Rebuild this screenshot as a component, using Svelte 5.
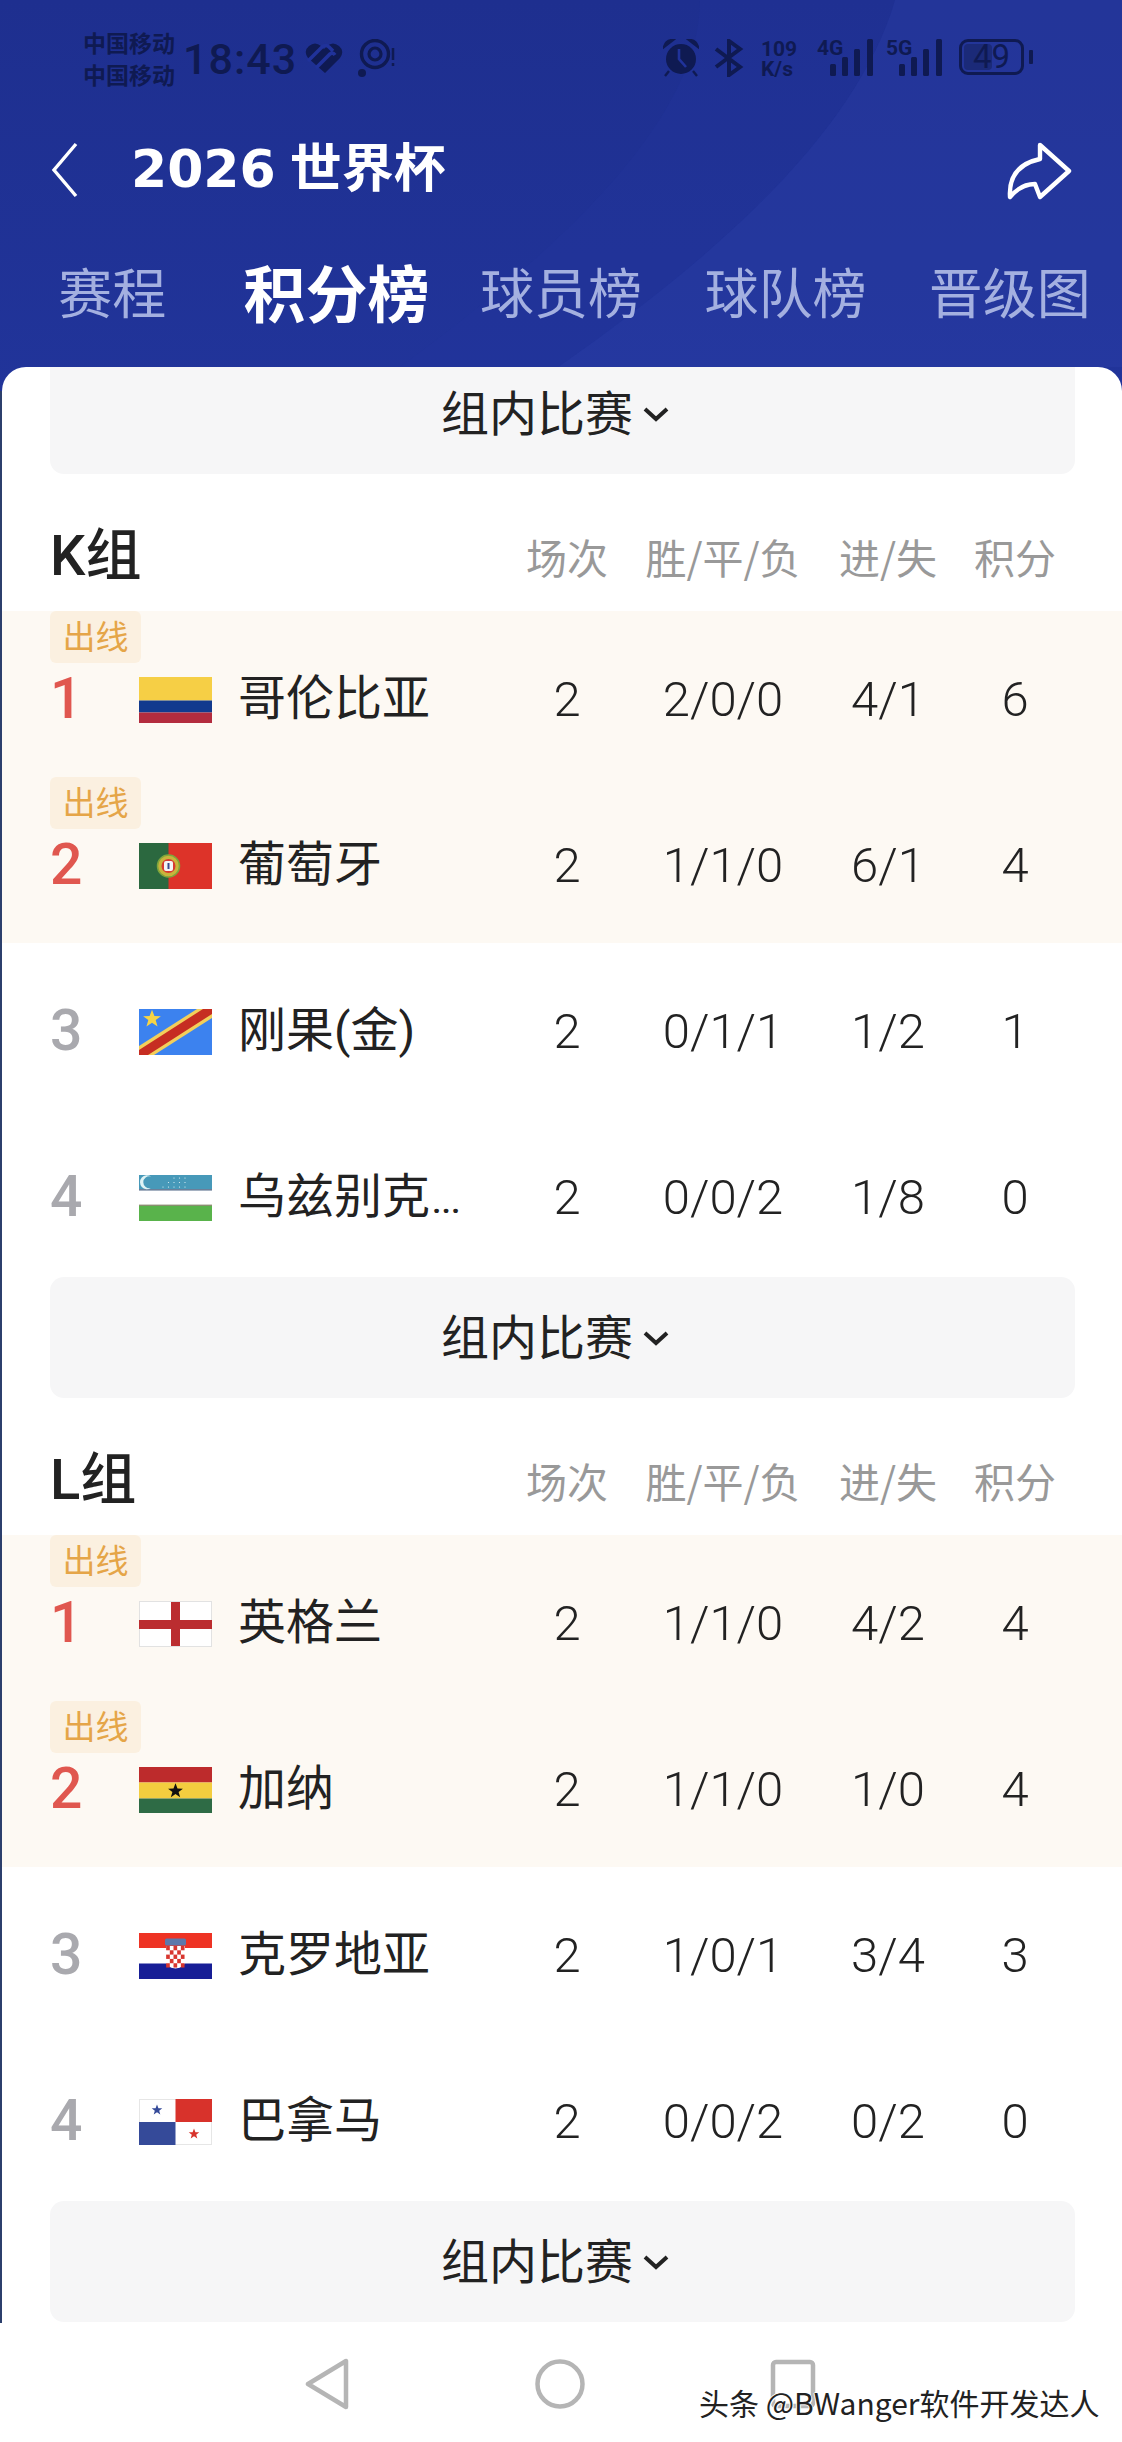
<script>
  const tabs = ['赛程', '积分榜', '球员榜', '球队榜', '晋级图'];

  const groups = [
    {
      name: 'K组',
      teams: [
        { rank: 1, flag: 'col', name: '哥伦比亚', played: 2, record: '2/0/0', goals: '4/1', pts: 6, through: true },
        { rank: 2, flag: 'por', name: '葡萄牙', played: 2, record: '1/1/0', goals: '6/1', pts: 4, through: true },
        { rank: 3, flag: 'cod', name: '刚果(金)', played: 2, record: '0/1/1', goals: '1/2', pts: 1 },
        { rank: 4, flag: 'uzb', name: '乌兹别克', cut: true, played: 2, record: '0/0/2', goals: '1/8', pts: 0 }
      ]
    },
    {
      name: 'L组',
      teams: [
        { rank: 1, flag: 'eng', name: '英格兰', played: 2, record: '1/1/0', goals: '4/2', pts: 4, through: true },
        { rank: 2, flag: 'gha', name: '加纳', played: 2, record: '1/1/0', goals: '1/0', pts: 4, through: true },
        { rank: 3, flag: 'cro', name: '克罗地亚', played: 2, record: '1/0/1', goals: '3/4', pts: 3 },
        { rank: 4, flag: 'pan', name: '巴拿马', played: 2, record: '0/0/2', goals: '0/2', pts: 0 }
      ]
    }
  ];

  // checker squares for the croatian shield
  const checks = [];
  for (let r = 0; r < 5; r++) {
    for (let c = 0; c < 5; c++) {
      if ((r + c) % 2 === 0) checks.push({ x: 26.5 + c * 4, y: 14 + r * 4 });
    }
  }
  const uzbDots = [];
  for (let r = 0; r < 3; r++) {
    for (let c = 0; c < 5; c++) {
      if (r + c >= 2) uzbDots.push({ x: 24 + c * 5.5, y: 3 + r * 4.5 });
    }
  }
  const star = 'M0 -5 L1.3 -1.6 L4.8 -1.5 L2 .6 L3 4 L0 2 L-3 4 L-2 .6 L-4.8 -1.5 L-1.3 -1.6Z';
</script>

{#snippet matchesButton()}
  <div class="matches">
    <span>组内比赛</span>
    <svg width="28" height="18" viewBox="0 0 28 18"><path d="M3 4 L14 14 L25 4" fill="none" stroke="#222" stroke-width="4" /></svg>
  </div>
{/snippet}

{#snippet flag(kind)}
  <svg class="flag" viewBox="0 0 73 46" width="73" height="46" preserveAspectRatio="none">
    {#if kind === 'col'}
      <rect width="73" height="23.5" fill="#f6cf45" />
      <rect y="23.5" width="73" height="12" fill="#123a8e" />
      <rect y="35.5" width="73" height="10.5" fill="#b32c3e" />
    {:else if kind === 'por'}
      <rect width="73" height="46" fill="#dd3329" />
      <rect width="29.5" height="46" fill="#2b683f" />
      <circle cx="29.5" cy="23" r="11" fill="#c9b43c" stroke="#7fa63c" stroke-width="1.5" />
      <circle cx="29.5" cy="23" r="7" fill="#d83a30" />
      <rect x="25" y="18" width="9" height="10" rx="2" fill="#f4f4f4" />
      <rect x="28.5" y="20" width="2" height="6" fill="#3a4a8c" />
    {:else if kind === 'cod'}
      <rect width="73" height="46" fill="#3c82ef" />
      <path d="M0 37 L58 0 L73 0 L73 9 L15 46 L0 46Z" fill="#f3cf5a" />
      <path d="M0 41 L64 0 L73 0 L73 5 L9 46 L0 46Z" fill="#c62d22" />
      <path transform="translate(13,10) scale(1.85)" d={star} fill="#f6d445" />
    {:else if kind === 'uzb'}
      <rect width="73" height="46" fill="#fff" />
      <rect width="73" height="15" fill="#4799b9" />
      <rect y="14" width="73" height="1.6" fill="#6b7f99" />
      <rect y="30" width="73" height="16" fill="#59b34b" />
      <rect y="29.6" width="73" height="1.4" fill="#8a8f70" />
      <path d="M12 1.5 A7 7 0 1 0 12 13 A6 6 0 1 1 12 1.5Z" fill="#dff3f5" />
      {#each uzbDots as d}
        <circle cx={d.x} cy={d.y} r=".6" fill="#e6f6f8" />
      {/each}
    {:else if kind === 'eng'}
      <rect x=".5" y=".5" width="72" height="45" fill="#fff" stroke="#e2e2e2" />
      <rect x="32" y="1" width="9" height="44" fill="#bb2d30" />
      <rect x="0" y="19" width="73" height="9" fill="#bb2d30" />
    {:else if kind === 'gha'}
      <rect width="73" height="15.5" fill="#bd2b2c" />
      <rect y="15.5" width="73" height="16" fill="#f3cd3f" />
      <rect y="31.5" width="73" height="14.5" fill="#2e6b45" />
      <path transform="translate(36.5,24) scale(1.55)" d={star} fill="#111" />
    {:else if kind === 'cro'}
      <rect width="73" height="15" fill="#ee3324" />
      <rect y="15" width="73" height="16" fill="#fff" />
      <rect y="30.5" width="73" height="15.5" fill="#171e96" />
      <rect x="26" y="5.5" width="21" height="7" rx="1.5" fill="#5d78ab" />
      <path d="M27 13 H46 V28 Q46 35 36.5 35.5 Q27 35 27 28Z" fill="#fff" />
      <g transform="scale(.92 1.08) translate(3,-2)">
        {#each checks as s}
          <rect x={s.x} y={s.y} width="4" height="4" fill="#d8362f" />
        {/each}
      </g>
    {:else if kind === 'pan'}
      <rect x=".5" y=".5" width="72" height="45" fill="#fff" stroke="#e6e6e6" />
      <rect x="36.5" y="0" width="36.5" height="23" fill="#d8322b" />
      <rect x="0" y="23" width="36.5" height="23" fill="#354a99" />
      <path transform="translate(18,11) scale(1.1)" d={star} fill="#354a99" />
      <path transform="translate(55,35) scale(1.1)" d={star} fill="#d8322b" />
    {/if}
  </svg>
{/snippet}

<div class="screen">
  <header>
    <svg class="swoosh" viewBox="0 0 1122 367" preserveAspectRatio="none">
      <path d="M895 0 C860 120 740 240 558 367 L1122 367 L1122 0Z" fill="#2a3fa8" opacity=".42" />
      <path d="M700 0 C700 120 560 250 400 367 L558 367 C740 240 860 120 895 0Z" fill="#2438a0" opacity=".22" />
    </svg>

    <div class="status">
      <div class="carriers"><span>中国移动</span><span>中国移动</span></div>
      <span class="clock">18:43</span>
      <svg class="ic" width="38" height="32" viewBox="0 0 38 32">
        <path d="M20 31 L3 16 Q-2 9 4 4 Q10 -1 16 4 L19 7 L22 4 Q28 -1 34 4 Q40 9 35 16Z" fill="#0f1a52" />
        <path d="M3 19 L17 5 Q21 2 24 5 L28 9 M11 26 L25 12 Q28 10 30 13" stroke="#20329a" stroke-width="3.6" fill="none" />
      </svg>
      <svg class="ic target" width="44" height="40" viewBox="0 0 44 40">
        <circle cx="18" cy="15" r="13.5" fill="none" stroke="#0f1a52" stroke-width="3.4" />
        <circle cx="18" cy="15" r="6" fill="none" stroke="#0f1a52" stroke-width="3.2" />
        <circle cx="5" cy="34" r="4" fill="#0f1a52" />
        <path d="M36 9 V21 M36 24 V27" stroke="#0f1a52" stroke-width="2.5" />
      </svg>

      <div class="status-right">
        <svg width="36" height="38" viewBox="0 0 36 38">
          <circle cx="18" cy="20" r="15" fill="#0f1a52" />
          <path d="M1 8 Q3 1 10 1Z M35 8 Q33 1 26 1Z M6 32 L2 37 M30 32 L34 37" fill="#0f1a52" stroke="#0f1a52" stroke-width="2.4" />
          <path d="M16 10 V20 L23 28" stroke="#20329a" stroke-width="2.6" fill="none" />
        </svg>
        <svg width="30" height="38" viewBox="0 0 30 38">
          <path d="M2 10 L26 28 L15 36 V2 L26 10 L2 28" fill="none" stroke="#0f1a52" stroke-width="4" />
        </svg>
        <div class="speed"><span>109</span><span>K/s</span></div>
        <div class="signal">
          <span class="net">4G</span>
          <svg width="44" height="38" viewBox="0 0 44 38">
            <rect x="0" y="25" width="6" height="12" rx="1.5" /><rect x="12" y="18" width="6" height="19" rx="1.5" />
            <rect x="24" y="10" width="6" height="27" rx="1.5" /><rect x="37" y="0" width="6" height="37" rx="1.5" />
          </svg>
        </div>
        <div class="signal">
          <span class="net">5G</span>
          <svg width="44" height="38" viewBox="0 0 44 38">
            <rect x="0" y="25" width="6" height="12" rx="1.5" /><rect x="12" y="18" width="6" height="19" rx="1.5" />
            <rect x="24" y="10" width="6" height="27" rx="1.5" /><rect x="37" y="0" width="6" height="37" rx="1.5" />
          </svg>
        </div>
        <div class="battery"><div class="level"></div><span>49</span></div>
        <div class="stud"></div>
      </div>
    </div>

    <div class="titlebar">
      <svg class="back" width="30" height="56" viewBox="0 0 30 56"><path d="M26 2 L4 28 L26 54" fill="none" stroke="#fff" stroke-width="3.4" /></svg>
      <h1><span class="year">2026</span> 世界杯</h1>
      <svg class="share" width="66" height="60" viewBox="1008 135 66 60">
        <path d="M1041 139 L1070 165 L1041 191 L1036 178 Q1022 178 1011 191 Q1009 160 1041 153Z" fill="none" stroke="#fff" stroke-width="4.4" stroke-linejoin="round" />
      </svg>
    </div>

    <nav>
      {#each tabs as t, i}
        <span class:active={i === 1}>{t}</span>
      {/each}
    </nav>
  </header>

  <main>
    <div class="scroll">
      {@render matchesButton()}
      {#each groups as g}
        <div class="group-head cols">
          <h2>{g.name}</h2>
          <span>场次</span><span>胜/平/负</span><span>进/失</span><span>积分</span>
        </div>
        {#each g.teams as t}
          <div class="row cols" class:through={t.through}>
            {#if t.through}<div class="tag">出线</div>{/if}
            <div class="team">
              <b class="rank" class:top={t.through}>{t.rank}</b>
              {@render flag(t.flag)}
              <span class="name">{t.name}{#if t.cut}<small>...</small>{/if}</span>
            </div>
            <span class="num">{t.played}</span>
            <span class="num">{t.record}</span>
            <span class="num">{t.goals}</span>
            <span class="num">{t.pts}</span>
          </div>
        {/each}
        {@render matchesButton()}
      {/each}
    </div>
  </main>

  <footer>
    <svg width="50" height="52" viewBox="0 0 50 52"><path d="M44 3 V49 L6 26Z" fill="none" stroke="#b5b5b5" stroke-width="4.5" stroke-linejoin="round" /></svg>
    <svg width="50" height="52" viewBox="0 0 50 52"><circle cx="25" cy="26" r="22.5" fill="none" stroke="#b5b5b5" stroke-width="4.5" /></svg>
    <svg width="50" height="52" viewBox="0 0 50 52"><rect x="5" y="4" width="40" height="44" rx="3" fill="none" stroke="#b5b5b5" stroke-width="4.5" /></svg>
    <div class="watermark">头条 @BWanger软件开发达人</div>
  </footer>
</div>

<style>
  :global(body) {
    margin: 0;
    font-family: Roboto, "Noto Sans CJK SC", sans-serif;
  }

  .screen {
    width: 1122px;
    height: 2442px;
    overflow: hidden;
    background: #2c3f6c;
    display: flex;
    flex-direction: column;
  }

  header {
    position: relative;
    height: 391px;
    margin-bottom: -24px;
    flex: none;
    background: linear-gradient(180deg, #1e2f8f, #21349a);
    color: #fff;
  }

  .swoosh {
    position: absolute;
    inset: 0;
    width: 100%;
    height: 367px;
  }

  .status {
    position: relative;
    height: 84px;
    padding: 26px 0 0 83px;
    box-sizing: border-box;
    display: flex;
    align-items: flex-start;
    color: #0f1a52;
  }

  .carriers {
    display: flex;
    flex-direction: column;
    font: 700 23px/32px "Noto Sans CJK SC", sans-serif;
  }

  .clock {
    font: 500 43px/48px Roboto, sans-serif;
    letter-spacing: 1px;
    margin: 9px 0 0 8px;
    width: 115px;
  }

  .ic { margin: 16px 0 0 7px; }
  .target { margin: 13px 0 0 14px; }

  .status-right {
    position: absolute;
    left: 663px;
    top: 39px;
    display: flex;
    align-items: flex-start;
  }

  .status-right > svg:nth-child(2) { margin-left: 15px; }

  .speed {
    margin-left: 17px;
    width: 50px;
    display: flex;
    flex-direction: column;
    font: 700 21px/20px "Roboto", sans-serif;
  }

  .signal {
    position: relative;
    width: 57px;
    height: 38px;
    margin-left: 6px;
    display: flex;
    justify-content: flex-end;
  }

  .signal + .signal { margin-left: 12px; }
  .signal svg { fill: #0f1a52; }

  .net {
    position: absolute;
    left: 0;
    top: -2px;
    font: 700 21px/22px Roboto, sans-serif;
  }

  .battery {
    position: relative;
    width: 65px;
    height: 36px;
    margin-left: 16px;
    box-sizing: border-box;
    border: 3.5px solid #0f1a52;
    border-radius: 9px;
    font: 400 33px/29px Roboto, sans-serif;
    text-align: center;
  }

  .level {
    position: absolute;
    left: 2px;
    top: 2px;
    bottom: 2px;
    width: 28px;
    background: #1b2a78;
    border-radius: 4px;
  }

  .battery span { position: relative; }

  .stud {
    width: 4px;
    height: 14px;
    margin: 11px 0 0 5px;
    background: #0f1a52;
    border-radius: 1px;
  }

  .titlebar {
    position: relative;
    height: 110px;
    margin-top: 30px;
    display: flex;
    align-items: center;
    padding: 0 50px;
  }

  .back { margin-top: 2px; }

  h1 {
    margin: 0 0 0 51px;
    font: 700 52px/60px "DejaVu Sans", "Noto Sans CJK SC", sans-serif;
    white-space: nowrap;
    flex: 1;
  }

  h1 .year { margin-right: -4px; }

  .share { margin-right: -1px; margin-top: 3px; }

  nav {
    position: relative;
    display: grid;
    grid-template-columns: repeat(5, 1fr);
    margin-top: 27px;
    justify-items: center;
    align-items: center;
    height: 80px;
    font: 400 54px/70px "Noto Sans CJK SC", sans-serif;
    color: #a4b0e0;
  }

  nav .active {
    color: #fff;
    font-weight: 700;
    font-size: 62px;
  }

  main {
    position: relative;
    flex: 1;
    margin-left: 2px;
    background: #fff;
    border-radius: 24px 24px 0 0;
    overflow: hidden;
  }

  .scroll { margin-top: -16px; }

  .matches {
    height: 121px;
    margin: 2px 47px 0 48px;
    background: #f6f6f7;
    border-radius: 14px;
    display: flex;
    align-items: center;
    justify-content: center;
    gap: 9px;
    padding-right: 14px;
    font: 400 48px/60px "Noto Sans CJK SC", sans-serif;
    color: #222;
  }

  .matches span { margin-top: -8px; }

  .cols {
    display: grid;
    grid-template-columns: 437px 160px 152px 178px 76px;
    align-items: center;
    padding-left: 48px;
    justify-items: center;
  }

  .group-head {
    height: 137px;
    box-sizing: border-box;
    padding-top: 26px;
    font: 400 41px/50px "Noto Sans CJK SC", sans-serif;
    color: #999;
    white-space: nowrap;
  }

  h2 {
    margin: 0;
    justify-self: start;
    font: 500 56px/60px Roboto, "Noto Sans CJK SC", sans-serif;
    color: #222;
  }

  .row {
    position: relative;
    height: 166px;
    box-sizing: border-box;
    padding-top: 66px;
    align-items: start;
    font: 400 48px/46px Roboto, "Noto Sans CJK SC", sans-serif;
    color: #222;
  }

  .through { background: #fdf9f3; }

  .tag {
    position: absolute;
    left: 48px;
    top: 0;
    width: 91px;
    height: 52px;
    background: #fbf0e0;
    border-radius: 6px;
    text-align: center;
    font: 400 33px/48px "Noto Sans CJK SC", sans-serif;
    color: #e5a548;
  }

  .team {
    justify-self: start;
    display: flex;
    align-items: flex-start;
  }

  .rank {
    width: 89px;
    font: 500 57px/44px Roboto, sans-serif;
    color: #a9a9ae;
  }

  .rank.top { color: #e0574f; }

  .flag { display: block; }

  .name {
    margin-left: 26px;
    margin-top: -1px;
    white-space: nowrap;
  }

  .name small { font-size: 34px; font-weight: 500; margin-left: 2px; }

  .num { font-size: 49px; font-weight: 300; }

  footer {
    position: relative;
    height: 119px;
    flex: none;
    background: #fff;
    display: flex;
    padding: 35px 0 0 302px;
    box-sizing: border-box;
    gap: 183px;
    align-items: flex-start;
  }

  .watermark {
    position: absolute;
    left: 699px;
    top: 61px;
    font: 400 30px/36px "Noto Sans CJK SC", sans-serif;
    color: #222;
    white-space: nowrap;
    text-shadow: 1px 1px 0 #fff, -1px 0 0 #fff, 0 -1px 0 #fff;
  }
</style>
